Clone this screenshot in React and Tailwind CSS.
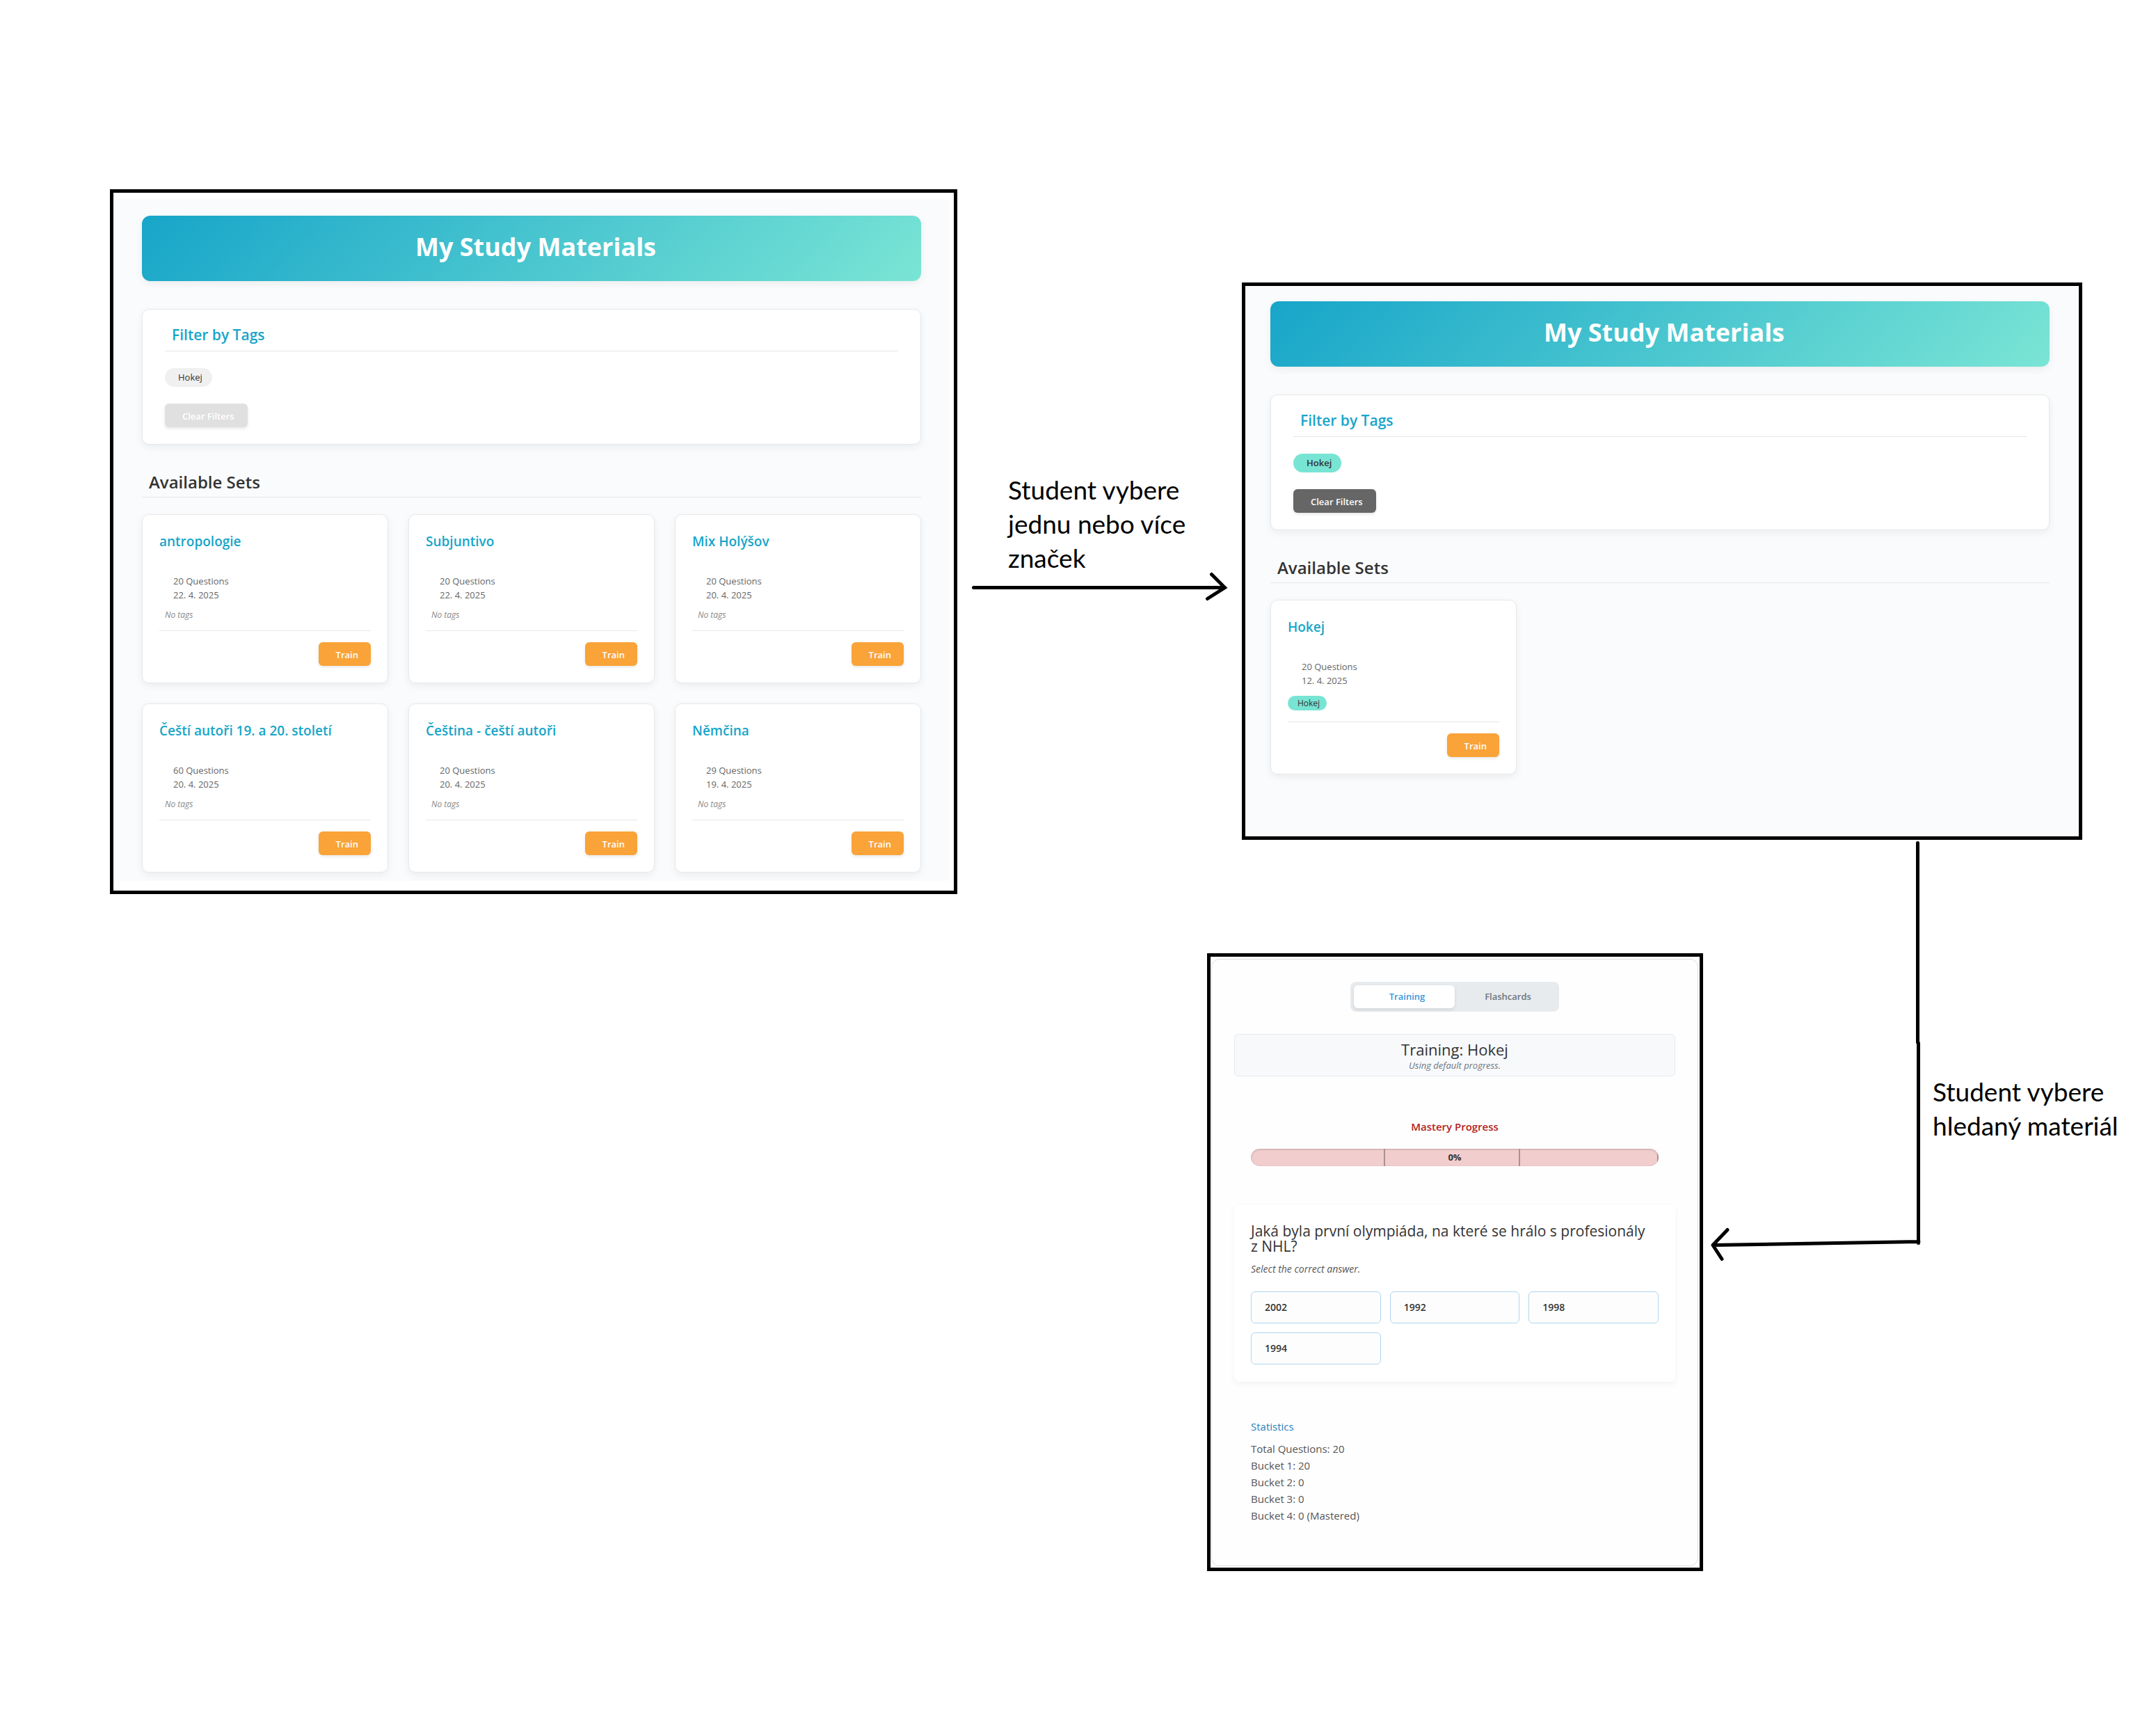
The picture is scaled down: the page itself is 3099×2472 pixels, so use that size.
import React from "react";

const sets = [
  { title: "antropologie", count: 20, date: "22. 4. 2025" },
  { title: "Subjuntivo", count: 20, date: "22. 4. 2025" },
  { title: "Mix Holýšov", count: 20, date: "20. 4. 2025" },
  { title: "Čeští autoři 19. a 20. století", count: 60, date: "20. 4. 2025" },
  { title: "Čeština - čeští autoři", count: 20, date: "20. 4. 2025" },
  { title: "Němčina", count: 29, date: "19. 4. 2025" },
];

const filteredSets = [{ title: "Hokej", count: 20, date: "12. 4. 2025", tag: "Hokej" }];

const answers = ["2002", "1992", "1998", "1994"];

const statistics = [
  "Total Questions: 20",
  "Bucket 1: 20",
  "Bucket 2: 0",
  "Bucket 3: 0",
  "Bucket 4: 0 (Mastered)",
];

function SetCard({ title, count, date, tag }) {
  return (
    <article className="rounded-[10px] border border-[#e6e8eb] bg-white p-6 shadow-[0_4px_12px_rgba(0,0,0,0.06)]">
      <h3 className="text-[19px] leading-7 font-semibold text-[#17a5c9]">{title}</h3>
      <div className="mt-[33px] pl-5 text-[13px] leading-5 text-[#666666]">
        <p>{count} Questions</p>
        <p>{date}</p>
      </div>
      <div className="mt-3 flex">
        {tag ? (
          <span className="rounded-full bg-[#78e4d4] pr-2.5 pl-3.5 text-[12px] leading-[21px] text-[#333333]">
            {tag}
          </span>
        ) : (
          <span className="pl-2 text-[12px] leading-[13px] text-[#888888] italic">No tags</span>
        )}
      </div>
      <div className="mt-4 flex justify-end border-t border-[#e6e8eb] pt-4">
        <button
          type="button"
          className="rounded-md bg-[#f9a338] pt-0.5 pr-[18px] pl-[25px] text-[13px] leading-8 font-semibold text-white shadow-[0_2px_4px_rgba(0,0,0,0.1)]"
        >
          Train
        </button>
      </div>
    </article>
  );
}

function StudyMaterials({ items, active }) {
  return (
    <>
      <header className="rounded-xl bg-[linear-gradient(135deg,#17a5c9,#7ae5d5)] pt-[21px] pb-[25px] pl-3 text-center shadow-[0_4px_12px_rgba(0,0,0,0.06)]">
        <h1 className="text-[36px] leading-12 font-bold text-white">My Study Materials</h1>
      </header>

      <section className="mt-10 rounded-[10px] border border-[#e6e8eb] bg-white px-8 pt-5 pb-6 shadow-[0_4px_12px_rgba(0,0,0,0.06)]">
        <h2 className="border-b border-[#e6e8eb] pb-[7px] pl-2.5 text-[21px] leading-8 font-semibold text-[#17a5c9]">
          Filter by Tags
        </h2>
        <div className="mt-6 flex">
          <button
            type="button"
            aria-pressed={active}
            className={
              active
                ? "rounded-full bg-[#78e4d4] pr-3.5 pl-[19px] text-[13px] leading-[27px] font-semibold text-[#333333]"
                : "rounded-full bg-[#f0f0f0] pr-3.5 pl-[19px] text-[13px] leading-[27px] text-[#333333]"
            }
          >
            Hokej
          </button>
        </div>
        <div className="mt-6 flex">
          <button
            type="button"
            disabled={!active}
            className={
              active
                ? "rounded-md bg-[#666666] pt-0.5 pr-[19px] pl-[25px] text-[13px] leading-8 font-semibold text-white shadow-[0_2px_4px_rgba(0,0,0,0.1)]"
                : "rounded-md bg-[#e0e0e0] pt-0.5 pr-[19px] pl-[25px] text-[13px] leading-8 font-semibold text-white shadow-[0_2px_4px_rgba(0,0,0,0.1)]"
            }
          >
            Clear Filters
          </button>
        </div>
      </section>

      <section className="mt-[38px]">
        <h2 className="border-b border-[#e6e8eb] pb-[5px] pl-2.5 text-[24px] leading-8 font-semibold text-[#333333]">
          Available Sets
        </h2>
        <div className="mt-6 grid grid-cols-3 items-start gap-[29px]">
          {items.map((item) => (
            <SetCard key={item.title} {...item} />
          ))}
        </div>
      </section>
    </>
  );
}

function Training() {
  return (
    <div className="rounded-xl border border-[#dddddd] bg-[#fefefe] px-8 pt-8 pb-[60px]">
      <div className="mx-auto flex w-[300px] rounded-lg bg-[#e8ebee] p-[5px] text-[13px] leading-[33px] font-semibold">
        <button
          type="button"
          aria-pressed="true"
          className="flex-1 rounded-md bg-white pl-2 text-[#3498db] shadow-[0_2px_5px_rgba(0,0,0,0.1)]"
        >
          Training
        </button>
        <button type="button" aria-pressed="false" className="flex-1 rounded-md pl-2 text-[#6c757d]">
          Flashcards
        </button>
      </div>

      <header className="mt-8 rounded-md border border-[#e6e9ec] bg-[#f8f9fb] pt-[7px] pb-1.5 text-center">
        <h1 className="text-[22px] leading-7 text-[#333333]">Training: Hokej</h1>
        <p className="text-[13px] leading-[18px] text-[#6c757d] italic">Using default progress.</p>
      </header>

      <section className="mt-15 px-6">
        <h2 className="text-center text-[15px] leading-6 font-semibold text-[#b22222]">Mastery Progress</h2>
        <div
          role="progressbar"
          aria-label="Mastery Progress"
          aria-valuenow={0}
          className="relative mt-5 grid h-[25px] grid-cols-[33fr_33fr_34fr] overflow-hidden rounded-full bg-[#f2cdcd] shadow-[inset_0_1px_3px_rgba(0,0,0,0.2)]"
        >
          <span className="border-r-2 border-[#ab9191]" />
          <span className="border-r-2 border-[#ab9191]" />
          <span className="border-r-2 border-[#ab9191]" />
          <span className="absolute inset-0 text-center text-[13px] leading-[25px] font-bold text-[#333333]">0%</span>
        </div>
      </section>

      <section className="mt-14 rounded-lg bg-white px-6 pt-[26px] pb-[25px] shadow-[0_3px_8px_rgba(0,0,0,0.05)]">
        <h2 className="text-[21px] leading-[22px] text-[#333333]">
          Jaká byla první olympiáda, na které se hrálo s profesionály z&nbsp;NHL?
        </h2>
        <p className="mt-3 text-[14px] leading-5 text-[#555555] italic">Select the correct answer.</p>
        <div className="mt-[22px] grid grid-cols-3 gap-[13px]">
          {answers.map((answer) => (
            <button
              key={answer}
              type="button"
              className="rounded-md border border-[#aed6f1] bg-[#fdfdfd] px-[19px] text-left text-[14px] leading-11 font-semibold text-[#333333]"
            >
              {answer}
            </button>
          ))}
        </div>
      </section>

      <section className="mt-[52px] px-6 text-[15px] leading-6">
        <h3 className="text-[#2980b9]">Statistics</h3>
        <ul className="mt-2 text-[#555555]">
          {statistics.map((line) => (
            <li key={line}>{line}</li>
          ))}
        </ul>
      </section>
    </div>
  );
}

export default function App() {
  return (
    <main className="flex min-h-screen items-start overflow-hidden bg-white pl-[158px] font-['Open_Sans','Noto_Sans',sans-serif]">
      <div className="min-w-0 flex-[1218] pt-[272px]">
        <section className="border-5 border-black bg-white pt-[9px] pr-[7px] pb-3.5">
          <div className="overflow-hidden bg-[#fafbfc] pt-6 pr-10 pb-3 pl-[41px]">
            <StudyMaterials items={sets} active={false} />
          </div>
        </section>
      </div>

      <div className="w-[409px] shrink-0 pt-[679px]">
        <p className="ml-[73px] w-[280px] font-['Lato',sans-serif] text-[37px] leading-[49px] text-black">
          Student vybere jednu nebo více značek
        </p>
        <svg
          className="-mt-[5px] ml-3.5 block"
          width="380"
          height="46"
          viewBox="0 0 380 46"
          fill="none"
          stroke="#000000"
          strokeWidth="5"
          strokeLinecap="round"
          aria-hidden="true"
        >
          <path d="M9.5 23.5H370M351.500 4.500L370.500 23.500L345.500 39.500" />
        </svg>
      </div>

      <div className="min-w-0 flex-[1314] pt-[406px]">
        <section className="mr-[106px] border-5 border-black bg-[#fafbfc] pt-[22px] pr-[42px] pb-[89px] pl-9">
          <StudyMaterials items={filteredSets} active={true} />
        </section>

        <div className="-ml-[50px] flex items-start">
          <section className="mt-[163px] min-w-0 flex-1 border-5 border-black bg-white pt-[3px] pr-0.5 pb-0.5 pl-px">
            <Training />
          </section>
          <svg
            className="ml-2 shrink-0"
            width="310"
            height="610"
            viewBox="0 0 310 610"
            fill="none"
            stroke="#000000"
            strokeWidth="5"
            strokeLinecap="round"
            strokeLinejoin="round"
            aria-hidden="true"
          >
            <path d="M300.500 4.500V291M301.500 292V579.500M302 577.500L6 582.500M27 560.500L6 582.500L19 602.500" />
          </svg>
          <p className="mt-[337px] ml-3 w-[321px] shrink-0 pr-10 font-['Lato',sans-serif] text-[37px] leading-[49px] text-black">
            Student vybere hledaný materiál
          </p>
        </div>
      </div>
    </main>
  );
}
